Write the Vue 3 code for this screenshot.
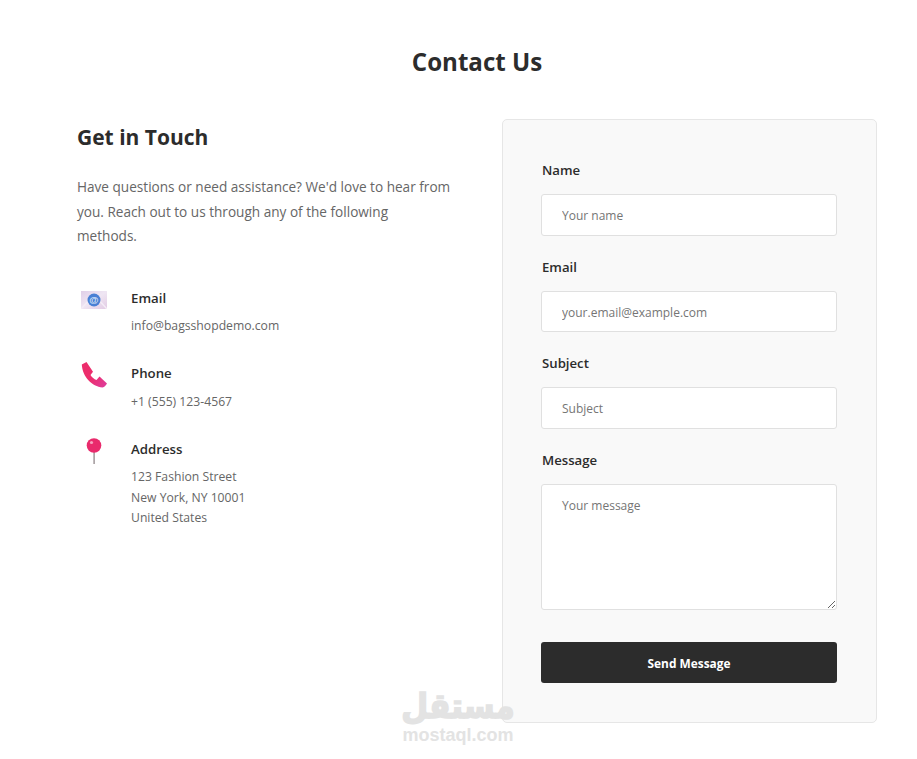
<template>
  <div class="contact-page">
    <h1 class="page-title">Contact Us</h1>
    <div class="contact-grid">
      <section class="contact-info">
        <h2>Get in Touch</h2>
        <p class="intro">Have questions or need assistance? We'd love to hear from you. Reach out to us through any of the following<br />methods.</p>

        <div class="method">
          <div class="method-icon">
            <svg width="26" height="18" viewBox="0 0 26 18">
              <defs>
                <linearGradient id="mail-fill" x1="0" y1="0" x2="1" y2="1">
                  <stop offset="0" stop-color="#e0cfe8" />
                  <stop offset="0.500" stop-color="#efe6f3" />
                  <stop offset="1" stop-color="#e2cbe4" />
                </linearGradient>
              </defs>
              <rect width="26" height="18" fill="url(#mail-fill)" />
              <path d="M0 18 9 8M26 18 17 8" fill="none" stroke="#f4edf6" stroke-width="1.500" />
              <circle cx="13" cy="9" r="6.500" fill="#4a80d4" />
              <text class="at-sign" x="13" y="12.200">@</text>
            </svg>
          </div>
          <div class="method-body">
            <h3>Email</h3>
            <p>info@bagsshopdemo.com</p>
          </div>
        </div>

        <div class="method">
          <div class="method-icon">
            <svg width="26" height="26" viewBox="0 0 26 26">
              <defs>
                <linearGradient id="phone-fill" x1="0" y1="0" x2="1" y2="1">
                  <stop offset="0.500" stop-color="#ec2d6c" />
                  <stop offset="1" stop-color="#dd3fa0" />
                </linearGradient>
              </defs>
              <path d="M.800 2.500 5.500 0 12 9.800 9.500 13C11 15.500 13 17 15.500 18L18.500 14.500 26 21.500C25 23 23.500 25.500 21.500 25.500 11 24.500 1.500 15 .800 2.500Z" fill="url(#phone-fill)" />
            </svg>
          </div>
          <div class="method-body">
            <h3>Phone</h3>
            <p>+1 (555) 123-4567</p>
          </div>
        </div>

        <div class="method">
          <div class="method-icon">
            <svg width="26" height="26" viewBox="0 0 26 26">
              <rect x="12.400" y="12" width="1.400" height="14" fill="#9a9193" />
              <circle cx="13" cy="7.500" r="7.300" fill="#e92a6c" />
              <circle cx="10.500" cy="4.500" r="1.600" fill="#f6a0bd" />
            </svg>
          </div>
          <div class="method-body">
            <h3>Address</h3>
            <p>123 Fashion Street<br />New York, NY 10001<br />United States</p>
          </div>
        </div>
      </section>

      <form class="contact-form" @submit.prevent>
        <div v-for="field in fields" :key="field.label" class="form-group">
          <label :for="field.id">{{ field.label }}</label>
          <input :id="field.id" type="text" :placeholder="field.placeholder" />
        </div>
        <div class="form-group last">
          <label for="message">Message</label>
          <textarea id="message" placeholder="Your message"></textarea>
        </div>
        <button type="submit">Send Message</button>
      </form>
    </div>
    <div class="watermark">
      <span class="wm-ar" dir="rtl">مستقل</span>
      <span class="wm-en">mostaql.com</span>
    </div>
  </div>
</template>

<script setup>
const fields = [
  { id: 'name', label: 'Name', placeholder: 'Your name' },
  { id: 'email', label: 'Email', placeholder: 'your.email@example.com' },
  { id: 'subject', label: 'Subject', placeholder: 'Subject' }
]
</script>

<style>
html, body {
  background: #fff;
}
</style>

<style scoped>
.contact-page {
  position: relative;
  box-sizing: border-box;
  width: 917px;
  height: 759px;
  overflow: hidden;
  padding: 42px 40px 0 77px;
  font-family: "Open Sans", "Noto Sans", sans-serif;
  color: #2c2c2c;
}

.page-title {
  margin: 0 0 37px;
  font-size: 24.100px;
  line-height: 40px;
  font-weight: 700;
  text-align: center;
}

.contact-grid {
  display: grid;
  grid-template-columns: 1fr 1fr;
  gap: 50px;
}

.contact-info h2 {
  margin: 0 0 20px;
  font-size: 21px;
  line-height: 36px;
  font-weight: 700;
}

.intro {
  margin: 0 0 39.200px;
  font-size: 13.600px;
  line-height: 24.500px;
  color: #666;
}

.method {
  display: flex;
  margin-bottom: 26.600px;
}

.method-icon {
  display: flex;
  align-items: center;
  box-sizing: border-box;
  width: 54px;
  height: 26px;
  margin-top: -1px;
  padding-left: 4px;
  flex: none;
}

.at-sign {
  font-family: "Liberation Sans", sans-serif;
  font-size: 9.500px;
  font-weight: 700;
  text-anchor: middle;
  fill: #d6e4f8;
}

.method h3 {
  margin: 0 0 8.400px;
  font-size: 13.250px;
  line-height: 20px;
  font-weight: 600;
}

.method p {
  margin: 0;
  font-size: 12.200px;
  line-height: 20.500px;
  color: #666;
}

.contact-form {
  box-sizing: border-box;
  height: 603.500px;
  padding: 40px 39px 0 38px;
  background: #f9f9f9;
  border: 1px solid #e6e6e6;
  border-radius: 5px;
}

.form-group {
  margin-bottom: 21px;
}

.form-group.last {
  margin-bottom: 32px;
}

label {
  display: block;
  margin-bottom: 14px;
  padding-left: 1px;
  font-size: 13.200px;
  line-height: 20px;
  font-weight: 600;
}

input,
textarea {
  display: block;
  box-sizing: border-box;
  width: 100%;
  padding: 12px 20px;
  font-family: inherit;
  font-size: 12px;
  line-height: 17px;
  color: #333;
  background: #fff;
  border: 1px solid #e0e0e0;
  border-radius: 3px;
  outline: none;
}

input {
  height: 41.600px;
  padding-top: 13px;
  padding-bottom: 11px;
}

textarea {
  height: 126.400px;
}

input::placeholder,
textarea::placeholder {
  color: #757575;
  opacity: 1;
}

button {
  display: block;
  width: 100%;
  height: 41px;
  font-family: inherit;
  font-size: 11.900px;
  font-weight: 700;
  color: #fff;
  background: #2c2c2c;
  border: none;
  border-radius: 3px;
}

.watermark {
  position: absolute;
  left: 402px;
  top: 686px;
  width: 112px;
  display: flex;
  flex-direction: column;
  align-items: center;
  color: #e3e3e3;
  pointer-events: none;
}

.wm-ar {
  font-family: "DejaVu Sans", sans-serif;
  font-size: 31px;
  line-height: 40px;
  font-weight: 700;
  -webkit-text-stroke: 1.500px #e3e3e3;
  transform: scaleY(1.120);
}

.wm-en {
  font-family: "Liberation Sans", sans-serif;
  font-size: 18px;
  line-height: 19px;
  font-weight: 700;
}
</style>
